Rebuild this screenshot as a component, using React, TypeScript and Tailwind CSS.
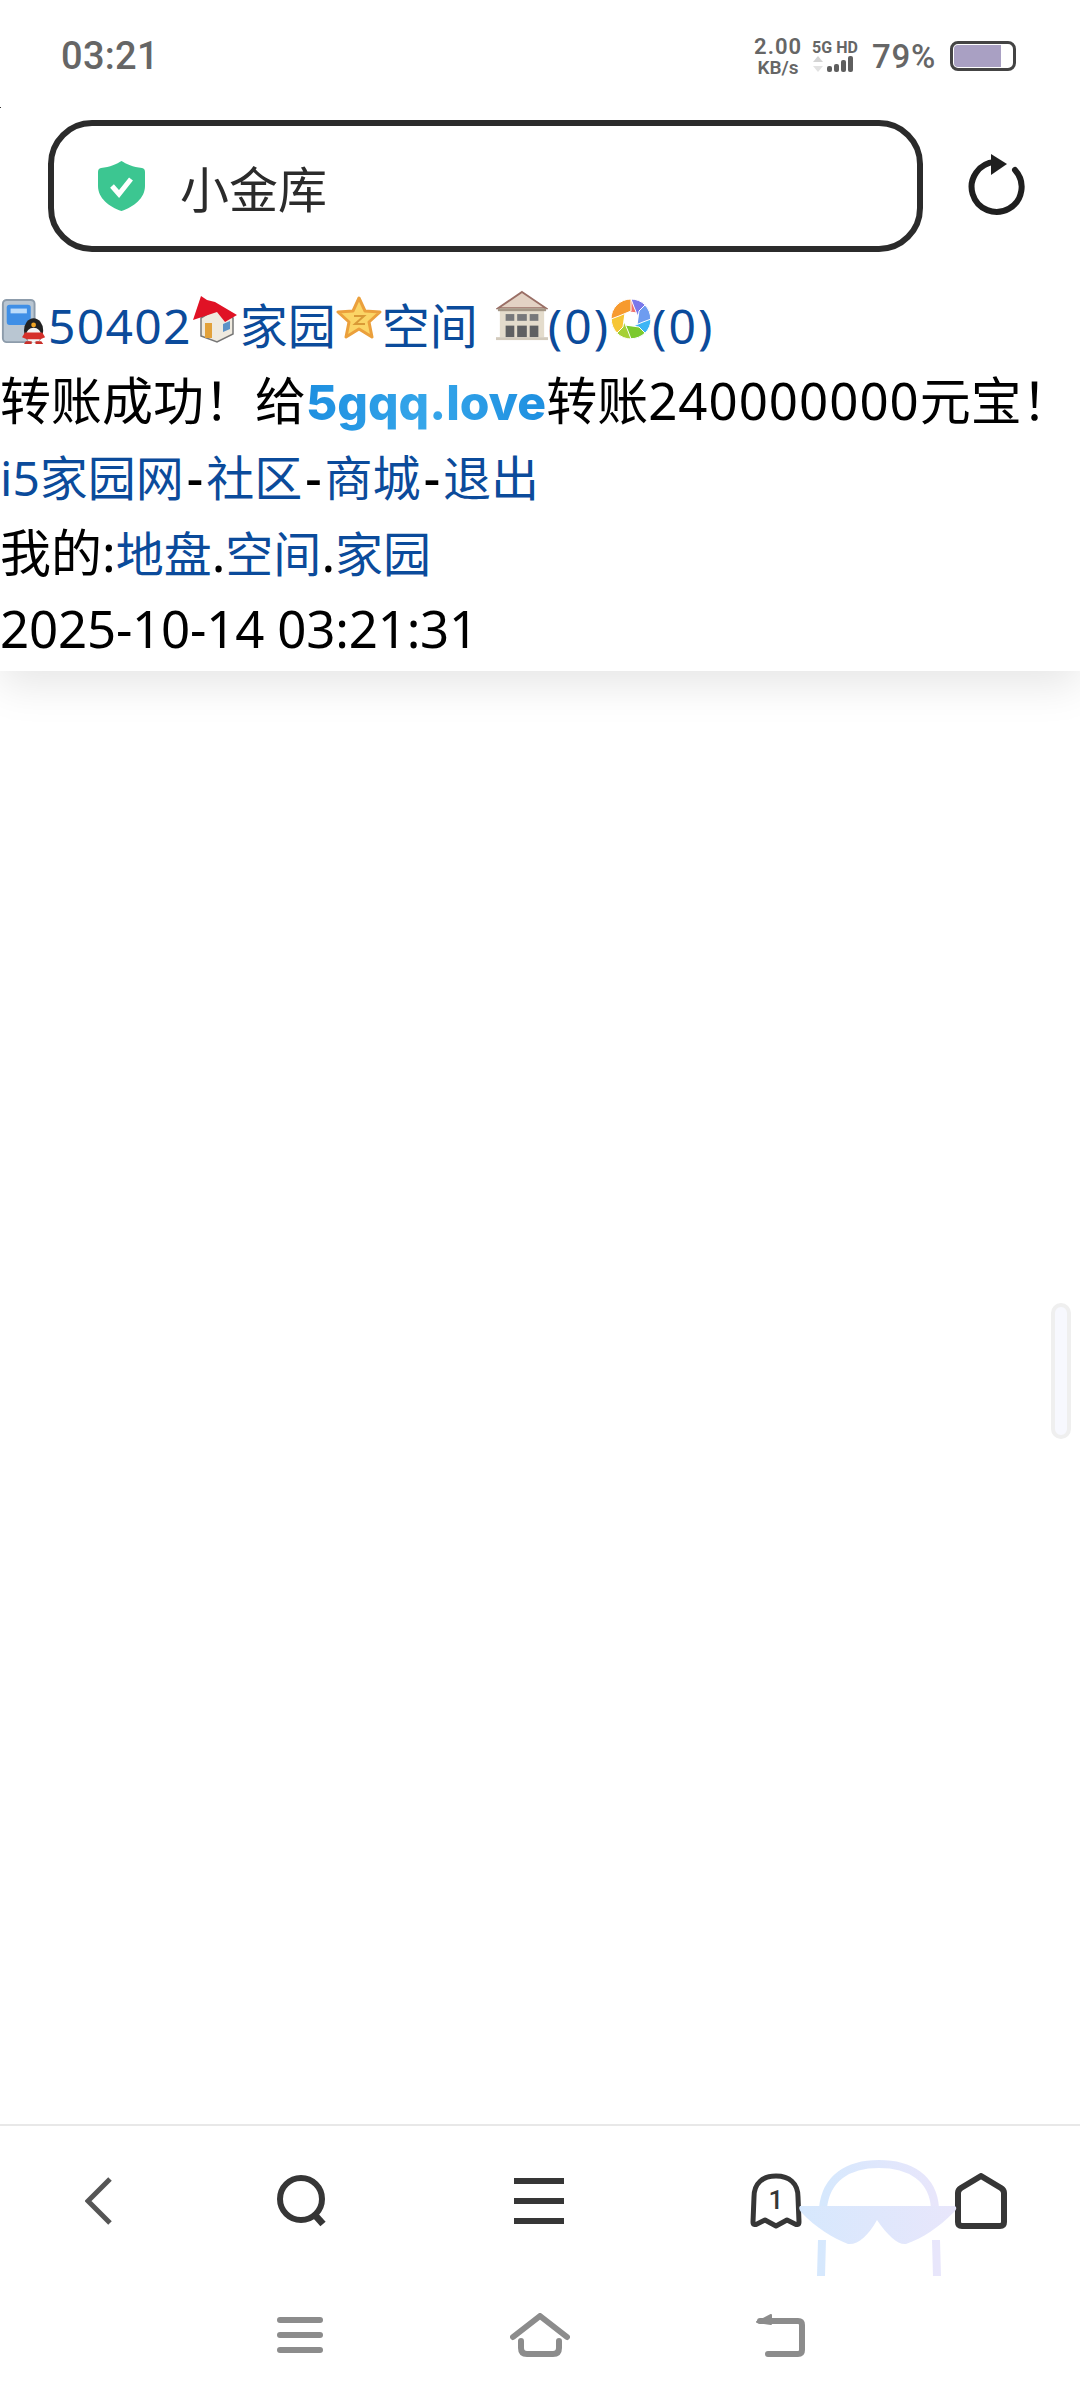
import React from 'react';

// links sit a little smaller than the black page text
const linkClass = 'text-[#0b4b9b] text-[48px]';

// small site emoticons in the first line
const PhoneIcon = () => (
  <svg width="48" height="48" viewBox="0 0 50 50" className="inline-block align-[-2px] blur-[0.4px]">
    <rect x="3" y="2" width="33" height="44" rx="4" fill="#b9c6d2" stroke="#8d9cab" strokeWidth="2" />
    <rect x="7" y="7" width="25" height="21" rx="3" fill="#3f8fe6" />
    <rect x="11" y="11" width="17" height="5" fill="#bcdcfa" />
    <ellipse cx="35" cy="34" rx="10" ry="13" fill="#222" />
    <ellipse cx="35" cy="39" rx="8" ry="8" fill="#f4f4f4" />
    <path d="M26 36h18l3 5-5 2H28l-5-2z" fill="#d5302a" />
    <circle cx="35" cy="28" r="2.500" fill="#f2a524" />
    <path d="M25 48h8v-3h-6zM37 45v3h8l-2-3z" fill="#c9302a" />
  </svg>
);

const HouseIcon = () => (
  <svg width="48" height="50" viewBox="0 0 46 50" className="inline-block align-[-2px] blur-[0.4px]">
    <path d="M8 22 L24 12 L40 22 L40 38 L24 46 L8 40 Z" fill="#efeadf" stroke="#777" strokeWidth="1.5" />
    <path d="M0 24 L8 0 L14 4 L22 6 L44 19 L32 26 L24 16 Z" fill="#e01225" />
    <rect x="12" y="27" width="7" height="15" fill="#e2a13a" />
    <path d="M30 28l7-3v8l-7 3z" fill="#5b92c7" />
  </svg>
);

const StarIcon = () => (
  <svg width="46" height="44" viewBox="0 0 46 44" className="inline-block align-[4px] blur-[0.4px]">
    <path d="M23 2 L29 15 L44 16 L33 26 L36 41 L23 33 L10 41 L13 26 L2 16 L17 15 Z" fill="#fbd566" stroke="#eba03c" strokeWidth="3" strokeLinejoin="round" />
    <path d="M18 20h10l-9 8h10" fill="none" stroke="#d99a36" strokeWidth="2" />
  </svg>
);

const BuildingIcon = () => (
  <svg width="52" height="54" viewBox="0 0 54 54" className="inline-block align-[1px] ml-[18px] blur-[0.5px]">
    <path d="M27 2 L52 19 L2 19 Z" fill="#e3d2c4" stroke="#9a6f66" strokeWidth="2" />
    <rect x="4" y="19" width="46" height="30" fill="#e4dccc" />
    <rect x="2" y="19" width="50" height="3" fill="#a39686" />
    <rect x="10" y="25" width="9" height="7" fill="#77787a" />
    <rect x="22" y="25" width="10" height="7" fill="#77787a" />
    <rect x="35" y="25" width="9" height="7" fill="#77787a" />
    <rect x="10" y="37" width="9" height="12" fill="#5f6062" />
    <rect x="22" y="37" width="10" height="12" fill="#5f6062" />
    <rect x="35" y="37" width="9" height="12" fill="#5f6062" />
    <rect x="0" y="49" width="54" height="3" fill="#d2cabc" />
  </svg>
);

const ShutterIcon = () => (
  <svg width="42" height="42" viewBox="0 0 42 42" className="inline-block align-[4px]">
    <g stroke="#fff" strokeWidth="1">
      <path d="M7 7 A20 20 0 0 1 35 7 L27 15 L13 13 Z" fill="#f0736b" />
      <path d="M21 1 A20 20 0 0 1 41 21 L29 21 L24 9 Z" fill="#7a78ea" />
      <path d="M35 7 A20 20 0 0 1 35 35 L27 27 L29 13 Z" fill="#6e9cf0" />
      <path d="M41 21 A20 20 0 0 1 21 41 L21 29 L33 24 Z" fill="#3db5f5" />
      <path d="M35 35 A20 20 0 0 1 7 35 L15 27 L29 29 Z" fill="#7bc92f" />
      <path d="M21 41 A20 20 0 0 1 1 21 L13 21 L18 33 Z" fill="#a6d036" />
      <path d="M7 35 A20 20 0 0 1 7 7 L15 15 L13 29 Z" fill="#f6c635" />
      <path d="M1 21 A20 20 0 0 1 21 1 L21 13 L9 18 Z" fill="#f79a2e" />
    </g>
    <circle cx="21" cy="21" r="7" fill="#fff" />
  </svg>
);

const SignalGroup = () => (
  <div className="flex items-end h-[16px] gap-[2px]">
    <svg width="12" height="16" viewBox="0 0 12 16" className="mr-[1px]">
      <path d="M6 0l5 6H1z" fill="#d4d4d4" />
      <path d="M6 16l5-6H1z" fill="#e2e2e2" />
    </svg>
    <div className="w-[5px] h-[6px] rounded-[2px] bg-[#5f5f5f]" />
    <div className="w-[5px] h-[8px] rounded-[2px] bg-[#5f5f5f]" />
    <div className="w-[5px] h-[12px] rounded-[2px] bg-[#5f5f5f]" />
    <div className="w-[5px] h-[16px] rounded-[2px] bg-[#5f5f5f]" />
  </div>
);

const StatusBar = () => (
  <div className="flex items-center justify-between h-[112px] pl-[61px] pr-[64px] text-[#666] font-['Roboto',sans-serif]">
    <span className="text-[38px] font-medium leading-none tracking-[0.3px]">03:21</span>
    <div className="flex items-center">
      <div className="flex flex-col items-center w-[50px] font-semibold">
        <span className="text-[22px] leading-[22px] tracking-[1px]">2.00</span>
        <span className="text-[19px] leading-[19px]">KB/s</span>
      </div>
      <div className="flex flex-col ml-[9px] w-[50px]">
        <span className="text-[16px] leading-[16px] font-bold whitespace-nowrap">5G HD</span>
        <SignalGroup />
      </div>
      <span className="ml-[10px] text-[33px] font-medium leading-none tracking-[0.7px]">79%</span>
      <div className="ml-[14px] w-[66px] h-[30px] rounded-[8px] border-[3px] border-[#444] p-[1px] bg-white">
        <div className="h-full w-[47px] rounded-l-[4px] bg-[#a9a0c3]" />
      </div>
    </div>
  </div>
);

const AddressBar = () => (
  <div className="flex items-center mt-[8px] ml-[48px]">
    <div className="flex items-center w-[875px] h-[132px] rounded-[44px] border-[6px] border-[#2b2b2b] pl-[44px]">
      <svg width="47" height="50" viewBox="0 0 47 50">
        <path d="M23.5 0 C28 3 35 6 44 7 Q47 7.500 47 11 L47 25 C47 37 36 46 23.500 50 C11 46 0 37 0 25 L0 11 Q0 7.500 3 7 C12 6 19 3 23.500 0 Z" fill="#3cc691" />
        <path d="M14 25 L21 33 L33 18" fill="none" stroke="#fff" strokeWidth="5" />
      </svg>
      <span className="ml-[35px] text-[49px] leading-none text-[#2b2b2b] font-['Noto_Sans_CJK_SC',sans-serif]">小金库</span>
    </div>
    <svg width="60" height="64" viewBox="0 0 60 64" className="ml-[42px] -mt-[2px]">
      <path d="M50 17 A25 25 0 1 1 30 9" fill="none" stroke="#1f1f1f" strokeWidth="6" strokeLinecap="round" />
      <path d="M26 1 L42 11 L26 22 Z" fill="#1f1f1f" />
    </svg>
  </div>
);

const Dash = () => <span className="px-[3px] font-medium">-</span>;

const Content = () => (
  <div className="mt-[34px] pb-[5px] bg-white shadow-[0_14px_40px_rgba(0,0,0,0.10)] relative text-black text-[51px] leading-[76px] font-['Noto_Sans','Noto_Sans_CJK_SC',sans-serif] whitespace-nowrap">
    <div className="h-[76px]">
      <PhoneIcon />
      <span className={`${linkClass} tracking-[1.3px]`}>50402</span>
      <HouseIcon />
      <span className={linkClass}>家园</span>
      <StarIcon />
      <span className={linkClass}>空间</span>
      <BuildingIcon />
      <span className={`${linkClass} tracking-[2px]`}>(0)</span>
      <ShutterIcon />
      <span className={`${linkClass} tracking-[2px]`}>(0)</span>
    </div>
    <div className="h-[76px]">
      转账成功！给
      <span className="font-extrabold bg-gradient-to-r from-[#1d8fe0] via-[#35a6ea] to-[#1d8fe0] bg-clip-text text-transparent font-['Inter',sans-serif] text-[48px]">5gqq.love</span>
      转账<span className="tracking-[1px]">240000000</span>元宝！
    </div>
    <div className="h-[76px]">
      <span className={linkClass}>i5家园网</span><Dash /><span className={linkClass}>社区</span><Dash /><span className={linkClass}>商城</span><Dash /><span className={linkClass}>退出</span>
    </div>
    <div className="h-[76px]">
      我的:<span className={linkClass}>地盘</span>.<span className={linkClass}>空间</span>.<span className={linkClass}>家园</span>
    </div>
    <div className="h-[76px] tracking-[-0.2px]">2025-10-14 03:21:31</div>
  </div>
);

const BottomNav = () => (
  <div className="relative border-t-2 border-[#e8e8e8]">
    <div className="grid grid-cols-[198px_210px_262px_212px_198px] h-[150px] items-center justify-items-center">
      <svg width="28" height="48" viewBox="0 0 28 48">
        <path d="M25 2 L3 24 L25 46" fill="none" stroke="#555" strokeWidth="5" />
      </svg>
      <svg width="52" height="52" viewBox="0 0 52 52">
        <ellipse cx="24" cy="24" rx="21" ry="21" fill="none" stroke="#363636" strokeWidth="6" />
        <path d="M37 39 L46 49" fill="none" stroke="#363636" strokeWidth="7" />
      </svg>
      <div className="flex flex-col gap-[14px] w-[50px]">
        <div className="h-[6px] bg-[#363636]" />
        <div className="h-[6px] bg-[#363636]" />
        <div className="h-[6px] bg-[#363636]" />
      </div>
      <div className="relative w-[52px] h-[56px]">
        <svg width="52" height="56" viewBox="0 0 52 56">
          <path d="M3 49 L4 24 C4 10 13 3 26 3 C39 3 48 10 48 24 L49 49 C49 52 47 52 45 51 L37 47 L26 53 L15 47 L7 51 C5 52 3 52 3 49 Z" fill="none" stroke="#363636" strokeWidth="5" strokeLinejoin="round" />
        </svg>
        <span className="absolute inset-0 flex items-center justify-center pb-[2px] text-[26px] font-medium leading-none text-[#363636] font-['Roboto',sans-serif]">1</span>
      </div>
      <svg width="52" height="56" viewBox="0 0 52 56">
        <path d="M26 3 L46 15 Q49 17 49 20 L49 49 Q49 53 45 53 L7 53 Q3 53 3 49 L3 20 Q3 17 6 15 Z" fill="none" stroke="#363636" strokeWidth="6" strokeLinejoin="round" />
      </svg>
    </div>

    <div className="grid grid-cols-3 px-[180px] h-[124px] pb-[6px] items-center justify-items-center">
      <div className="flex flex-col gap-[9px] w-[46px]">
        <div className="h-[6px] rounded-full bg-[#8c8c8c]" />
        <div className="h-[6px] rounded-full bg-[#8c8c8c]" />
        <div className="h-[6px] rounded-full bg-[#8c8c8c]" />
      </div>
      <svg width="60" height="44" viewBox="0 0 60 44">
        <path d="M3 24 L30 3 L57 24" fill="none" stroke="#8c8c8c" strokeWidth="6" strokeLinecap="round" strokeLinejoin="round" />
        <path d="M11 28 L11 35 Q11 41 17 41 L43 41 Q49 41 49 35 L49 28" fill="none" stroke="#8c8c8c" strokeWidth="6" strokeLinecap="round" />
      </svg>
      <svg width="50" height="44" viewBox="0 0 50 44">
        <path d="M5 8 L43 8 Q47 8 47 12 L47 37 Q47 41 43 41 L13 41" fill="none" stroke="#8c8c8c" strokeWidth="6" strokeLinecap="round" />
        <path d="M2 9 L16 2 L16 11 Z" fill="#8c8c8c" stroke="#8c8c8c" strokeWidth="2" strokeLinejoin="round" />
      </svg>
    </div>

    {/* floating glasses widget over the nav */}
    <svg width="160" height="116" viewBox="0 0 160 116" className="absolute left-[798px] top-[34px]">
      <defs>
        <linearGradient id="glassFill" x1="0" x2="1" y1="0" y2="0">
          <stop offset="0" stopColor="#d6e8fd" />
          <stop offset="1" stopColor="#e8e6fb" />
        </linearGradient>
      </defs>
      <path d="M25 48 C28 18 50 4 81 4 C112 4 135 18 137 48" fill="none" stroke="url(#glassFill)" strokeWidth="8" />
      <path d="M24 80 L23 116 M138 80 L139 116" fill="none" stroke="url(#glassFill)" strokeWidth="8" />
      <path d="M2 46 L157 46 Q160 48 156 52 C140 68 125 78 108 84 C100 85 90 76 79 60 C70 76 60 85 50 84 C35 78 18 68 3 52 Q0 48 2 46 Z" fill="url(#glassFill)" />
    </svg>
  </div>
);

export default function App() {
  return (
    <div className="relative flex flex-col w-[1080px] h-[2400px] bg-white overflow-hidden">
      <div className="relative z-10 bg-white pb-[34px] -mb-[34px]">
        <StatusBar />
        <AddressBar />
      </div>
      <Content />
      <div className="flex-1" />
      <BottomNav />
      <div className="absolute z-20 left-0 top-[107px] w-[1px] h-[1px] bg-[#333]" />
      {/* page scroll handle */}
      <div className="absolute left-[1051px] top-[1303px] w-[20px] h-[136px] rounded-full border-[4px] border-[#efefef] bg-[#f7f8fe]" />
    </div>
  );
}
